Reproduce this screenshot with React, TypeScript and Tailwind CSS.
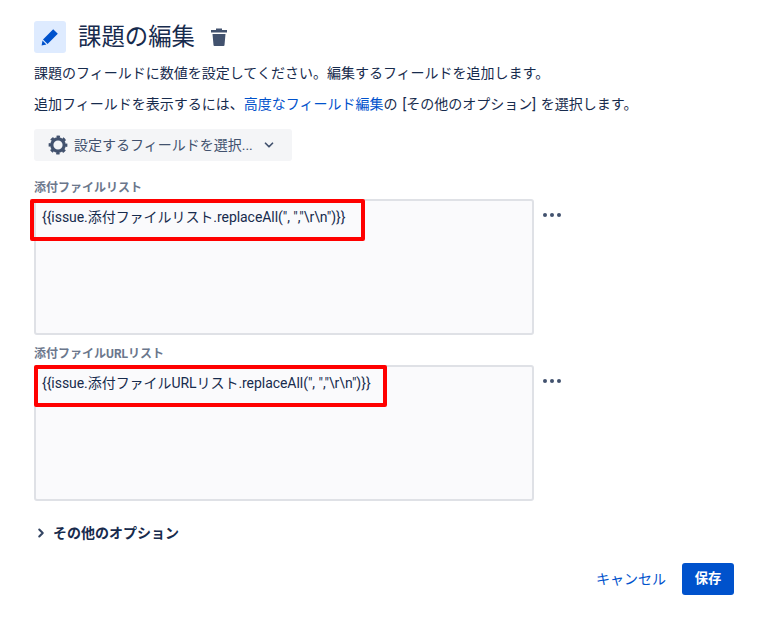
import { ChevronDown, ChevronRight } from 'lucide-react'

const fontStack = "font-['Roboto','Noto_Sans_CJK_JP',sans-serif]"

function Field({ label, value, boxClass }: { label: string; value: string; boxClass: string }) {
  return (
    <div className="flex items-start">
      <div className="w-[500px]">
        <div className="h-[20px] pt-[1px] text-[12px] leading-[16px] font-bold text-[#6b778c]">{label}</div>
        <div className="relative h-[136px] rounded-[3px] border-2 border-[#dfe1e6] bg-[#fafafc] px-[6px] py-[6px] text-[14px] leading-[20px] tracking-[-0.05px] text-[#172b4d]">
          {value}
          {/* red annotation drawn over the field */}
          <div className={`absolute h-[42px] rounded-[2px] border-4 border-[#ff0000] ${boxClass}`} />
        </div>
      </div>
      <div className="mt-[34px] ml-[9px] flex gap-[3px]">
        <span className="h-[4px] w-[4px] rounded-full bg-[#42526e]" />
        <span className="h-[4px] w-[4px] rounded-full bg-[#42526e]" />
        <span className="h-[4px] w-[4px] rounded-full bg-[#42526e]" />
      </div>
    </div>
  )
}

export default function App() {
  return (
    <div className={`h-[633px] w-[772px] bg-white pt-[21px] pl-[34px] ${fontStack}`}>
      {/* Header */}
      <div className="flex h-[32px] items-center">
        <div className="flex h-[32px] w-[32px] items-center justify-center rounded-[3px] bg-[#deebff]">
          <svg width="18" height="18" viewBox="0 0 18 18" fill="#0052cc">
            <path d="M12.2 1.2 16.8 5.8 6.6 16 2 11.4Z M1.5 12.6 5.4 16.5 .6 17.4Z" />
          </svg>
        </div>
        <h1 className="ml-[12px] text-[23.4px] leading-[32px] font-normal text-[#172b4d]">課題の編集</h1>
        <svg className="ml-[15px]" width="18" height="20" viewBox="0 0 18 20" fill="#42526e">
          <path d="M6 1.5h6v1.5H6Z M1 3h16v2.5H1Z M2.5 7h13l-1 11a1 1 0 0 1-1 1h-9a1 1 0 0 1-1-1Z" />
        </svg>
      </div>

      <p className="mt-[10px] text-[14px] leading-[20px] text-[#172b4d]">
        課題のフィールドに数値を設定してください。編集するフィールドを追加します。
      </p>
      <p className="mt-[11px] text-[14px] leading-[20px] [word-spacing:1.5px] text-[#172b4d]">
        追加フィールドを表示するには、<span className="text-[#0052cc]">高度なフィールド編集</span>の [その他のオプション] を選択します。
      </p>

      <button className="mt-[15px] flex h-[32px] w-[258px] items-center rounded-[3px] bg-[#f4f5f7] pl-[13px] text-[14px] text-[#42526e]">
        <svg width="22" height="22" viewBox="0 0 22 22" fill="none" stroke="#42526e">
          <circle cx="11" cy="11" r="6.2" strokeWidth="3.2" />
          <circle cx="11" cy="11" r="8.2" strokeWidth="2.4" strokeDasharray="3.4 3.04" strokeDashoffset="1.7" />
        </svg>
        <span className="ml-[5px]">設定するフィールドを選択...</span>
        <ChevronDown className="ml-[9px] h-[14px] w-[14px]" strokeWidth={3} />
      </button>

      <div className="mt-[18px]">
        <Field
          label="添付ファイルリスト"
          value={'{{issue.添付ファイルリスト.replaceAll(", ","\\r\\n")}}'}
          boxClass="-top-[2px] -left-[6px] w-[335px]"
        />
      </div>
      <div className="mt-[10px]">
        <Field
          label="添付ファイルURLリスト"
          value={'{{issue.添付ファイルURLリスト.replaceAll(", ","\\r\\n")}}'}
          boxClass="-top-[2px] -left-[2px] w-[353px]"
        />
      </div>

      <div className="mt-[22px] flex h-[20px] items-center text-[14px] font-bold text-[#172b4d]">
        <ChevronRight className="h-[14px] w-[14px] text-[#344563]" strokeWidth={3.5} />
        <span className="ml-[5px]">その他のオプション</span>
      </div>

      <div className="mt-[20px] flex w-[700px] items-center justify-end">
        <span className="text-[14px] text-[#0052cc]">キャンセル</span>
        <button className="ml-[16px] h-[32px] w-[52px] rounded-[3px] bg-[#0052cc] text-[13.3px] font-bold text-white">保存</button>
      </div>
    </div>
  )
}
